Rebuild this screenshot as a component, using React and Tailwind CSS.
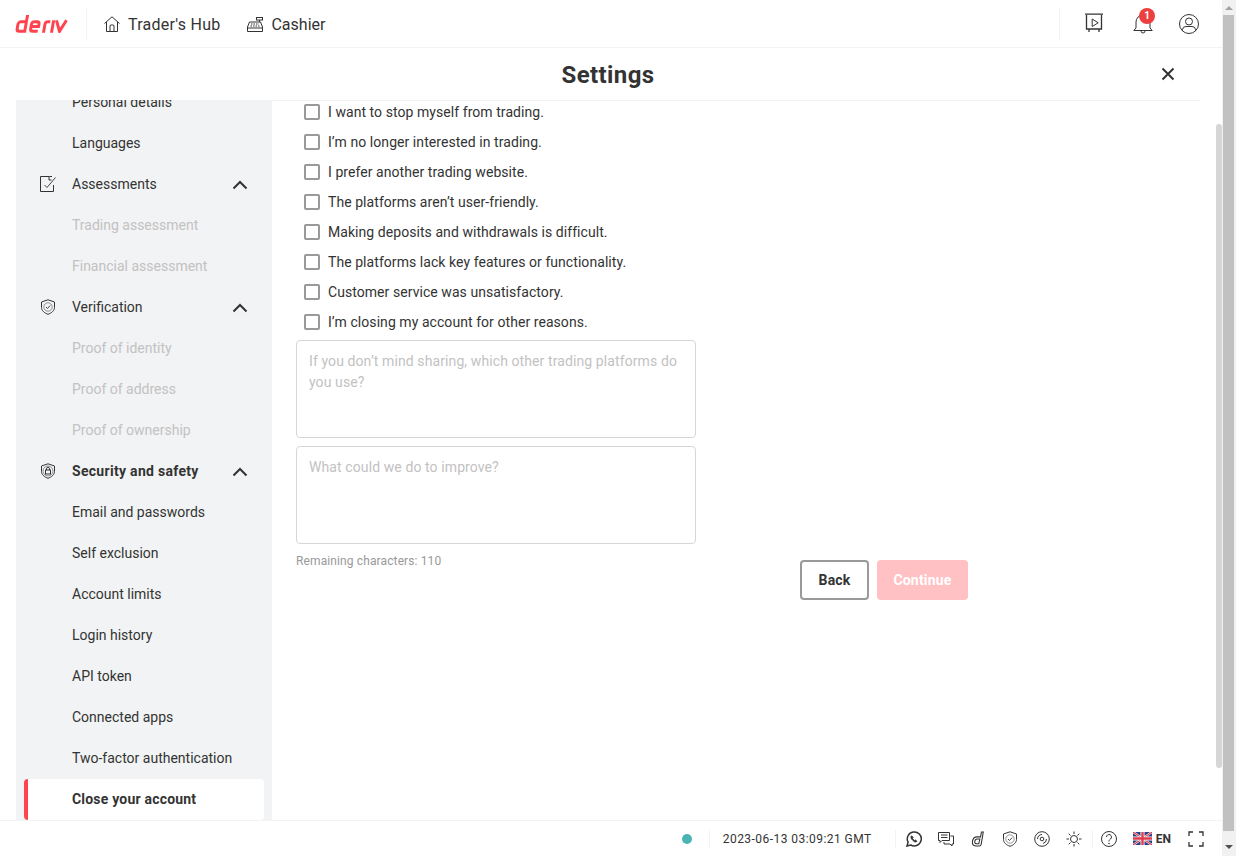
import React from "react";

function Chevron() {
  return (
    <svg width="16" height="10" viewBox="0 0 16 10" fill="none" stroke="#333333" strokeWidth="2" className="shrink-0 mt-[2px]">
      <path d="M1.5 8.5 8 2l6.5 6.5" />
    </svg>
  );
}

function DocIcon() {
  return (
    <svg width="16" height="16" viewBox="0 0 16 16" fill="none" stroke="#333333" strokeWidth="1">
      <path d="M13.5 9v6.500H.5V.5h9l2.500 0M9 .5V4h2.500" />
      <path d="M4.500 9 7 11.500 15.500 1.500" strokeWidth="0.9" />
    </svg>
  );
}

function ShieldCheck() {
  return (
    <svg width="16" height="16" viewBox="0 0 16 16" fill="none" stroke="#333333" strokeWidth="1">
      <path d="M8 .8 14.500 3v5.500c0 3-2.800 5.500-6.500 6.800C4.300 14 1.500 11.500 1.500 8.500V3z" />
      <circle cx="8" cy="8" r="4.200" strokeWidth="0.5" />
      <path d="M6 8l1.500 1.500L10.200 6.500" strokeWidth="0.9" />
    </svg>
  );
}

function ShieldLock() {
  return (
    <svg width="16" height="16" viewBox="0 0 16 16" fill="none" stroke="#333333" strokeWidth="1">
      <path d="M8 .8 14.500 3v5.500c0 3-2.800 5.500-6.500 6.800C4.300 14 1.500 11.500 1.500 8.500V3z" />
      <circle cx="8" cy="8" r="5" strokeWidth="0.5" />
      <rect x="5.500" y="7" width="5" height="4" />
      <path d="M6.500 7V5.800a1.500 1.500 0 0 1 3 0V7" />
    </svg>
  );
}

function SideItem({ children, disabled }) {
  return (
    <div className={`h-[41px] shrink-0 flex items-center pl-[56px] text-sm ${disabled ? "text-[#c2c2c2]" : "text-[#333333]"}`}>
      {children}
    </div>
  );
}

function SideGroup({ icon, label, bold }) {
  return (
    <div className="h-[41px] shrink-0 flex items-center pl-6 pr-6">
      <span className="w-8 flex justify-start">{icon}</span>
      <span className={`flex-1 text-sm text-[#333333] ${bold ? "font-bold tracking-[0.3px]" : ""}`}>{label}</span>
      <Chevron />
    </div>
  );
}

function Sidebar() {
  return (
    <aside className="w-[256px] ml-4 shrink-0 bg-[#f2f3f4] overflow-hidden">
      <div className="-mt-[19px] flex flex-col">
        <SideItem>Personal details</SideItem>
        <SideItem>Languages</SideItem>
        <SideGroup icon={<DocIcon />} label="Assessments" />
        <SideItem disabled>Trading assessment</SideItem>
        <SideItem disabled>Financial assessment</SideItem>
        <SideGroup icon={<ShieldCheck />} label="Verification" />
        <SideItem disabled>Proof of identity</SideItem>
        <SideItem disabled>Proof of address</SideItem>
        <SideItem disabled>Proof of ownership</SideItem>
        <SideGroup icon={<ShieldLock />} label="Security and safety" bold />
        <SideItem>Email and passwords</SideItem>
        <SideItem>Self exclusion</SideItem>
        <SideItem>Account limits</SideItem>
        <SideItem>Login history</SideItem>
        <SideItem>API token</SideItem>
        <SideItem>Connected apps</SideItem>
        <SideItem>Two-factor authentication</SideItem>
        <div className="mx-2 mt-px h-[41px] shrink-0 flex items-center pb-[2px] pl-11 bg-white rounded border-l-4 border-[#ff444f] text-sm font-bold tracking-[0.2px] text-[#333333]">
          Close your account
        </div>
      </div>
    </aside>
  );
}

const reasons = [
  "I want to stop myself from trading.",
  "I’m no longer interested in trading.",
  "I prefer another trading website.",
  "The platforms aren’t user-friendly.",
  "Making deposits and withdrawals is difficult.",
  "The platforms lack key features or functionality.",
  "Customer service was unsatisfactory.",
  "I’m closing my account for other reasons.",
];

function Reason({ text }) {
  return (
    <label className="h-[30px] flex items-center pl-2">
      <span className="w-4 h-4 rounded-[2px] border-2 border-[#999999] bg-white shrink-0" />
      <span className="ml-2 text-sm tracking-[0.06px] text-[#333333]">{text}</span>
    </label>
  );
}

function Content() {
  return (
    <main className="flex-1 min-w-0 relative pl-6 overflow-hidden">
      <div className="w-[672px] flex">
        <div className="w-[400px] flex flex-col">
          <div className="-mt-[3px] flex flex-col">
            {reasons.map((r) => (
              <Reason key={r} text={r} />
            ))}
          </div>
          <textarea
            readOnly
            placeholder="If you don’t mind sharing, which other trading platforms do you use?"
            className="mt-[3px] w-[400px] h-[98px] resize-none rounded border border-[#d6d6d6] px-3 py-[10px] text-sm tracking-[0.1px] leading-[21px] outline-none placeholder:text-[#c2c2c2] overflow-hidden"
          />
          <textarea
            readOnly
            placeholder="What could we do to improve?"
            className="mt-2 w-[400px] h-[98px] resize-none rounded border border-[#d6d6d6] px-3 py-[10px] text-sm tracking-[0.1px] leading-[21px] outline-none placeholder:text-[#c2c2c2] overflow-hidden"
          />
          <p className="mt-2 text-xs tracking-[0.12px] leading-[18px] text-[#999999]">Remaining characters: 110</p>
        </div>
        <div className="flex-1 flex justify-end items-start gap-2 pt-[460px]">
          <button className="w-[69px] h-10 rounded border-2 border-[#999999] bg-white text-sm font-bold tracking-[0.2px] text-[#333333]">Back</button>
          <button className="w-[91px] h-10 rounded bg-[#ffc1c4] text-sm font-bold tracking-[0.2px] text-white">Continue</button>
        </div>
      </div>
      <div className="absolute right-0 top-6 bottom-[52px] w-[6px] rounded-full bg-[#d6d6d6]" />
    </main>
  );
}

function Footer() {
  const s = { fill: "none", stroke: "#333333", strokeWidth: 1 };
  return (
    <footer className="h-9 shrink-0 border-t border-[#f2f3f4] bg-white flex items-center justify-end pr-[18px]">
      <span className="w-[10px] h-[10px] rounded-full bg-[#4bb4b3]" />
      <span className="ml-[17px] w-px h-[18px] bg-[#f2f3f4]" />
      <span className="ml-[13px] w-[148px] whitespace-nowrap text-xs tracking-[0.45px] text-[#333333]">2023-06-13 03:09:21 GMT</span>
      <span className="ml-[24px] w-px h-[18px] bg-[#f2f3f4]" />
      <span className="ml-[10px] flex items-center gap-4">
        <svg width="16" height="16" viewBox="0 0 16 16" {...s} strokeWidth="1.500">
          <path d="M1 15l1.100-3.800A7 7 0 1 1 4.800 14z" />
          <path d="M5.500 4.800c-1 1 -.5 2.700 1 4.300s3.200 2.500 4.300 1.300l-1.300-1.500-1 .6c-.8-.3-1.800-1.300-2.100-2.200l.6-1z" strokeWidth="1" fill="#333333" />
        </svg>
        <svg width="16" height="16" viewBox="0 0 16 16" {...s}>
          <path d="M.5 1.500h11v8H4l-2 2V9.500H.5z" />
          <path d="M3 4h6.500M3 6.500h6.500" />
          <path d="M12.500 5h3v8H14v2l-2-2H6v-2" />
        </svg>
        <svg width="16" height="16" viewBox="1 0.500 12.500 15" {...s}>
          <path d="M10.500 1.500 9.600 6H6.500C4 6 2.300 8 2 10.500 1.800 13 3 14.500 5.500 14.500h3c1 0 1.500-.5 1.700-1.500l2-11.500z" />
          <path d="M9 8 8 12.500H6C4.700 12.500 4 11.500 4.200 10.200 4.400 9 5.200 8 6.500 8z" />
        </svg>
        <ShieldCheck />
        <svg width="16" height="16" viewBox="0 0 16 16" {...s}>
          <circle cx="8" cy="8" r="7.300" />
          <circle cx="8" cy="8" r="1.800" />
          <path d="M3.500 8A4.500 4.500 0 0 1 8 3.500M12.500 8A4.500 4.500 0 0 1 9 12.400" />
        </svg>
        <svg width="16" height="16" viewBox="0 0 16 16" {...s}>
          <circle cx="8" cy="8" r="3.500" />
          <path d="M8 .5v2.500M8 13v2.500M.5 8H3M13 8h2.500M2.700 2.700l1.800 1.800M11.500 11.500l1.800 1.800M2.700 13.300l1.800-1.800M11.500 4.500l1.800-1.800" />
        </svg>
      </span>
      <span className="ml-[10px] w-px h-[18px] bg-[#f2f3f4]" />
      <svg className="ml-2" width="16" height="16" viewBox="0 0 16 16" {...s}>
        <circle cx="8" cy="8" r="7.500" />
        <path d="M5.500 6a2.500 2.500 0 1 1 4 2c-1 .8-1.500 1-1.500 2.500" />
        <circle cx="8" cy="12.500" r=".4" />
      </svg>
      <svg className="ml-4" width="19" height="13" viewBox="0 0 19 13">
        <rect width="19" height="13" fill="#2b3f86" />
        <path d="M0 0l19 13M19 0 0 13" stroke="#ffffff" strokeWidth="2.200" />
        <path d="M0 0l19 13M19 0 0 13" stroke="#dd3d4c" strokeWidth="1.100" />
        <path d="M9.500 0v13M0 6.500h19" stroke="#ffffff" strokeWidth="4" />
        <path d="M9.500 0v13M0 6.500h19" stroke="#dd3d4c" strokeWidth="2.400" />
      </svg>
      <span className="ml-[4px] text-xs font-bold text-[#333333]">EN</span>
      <svg className="ml-[17px]" width="16" height="16" viewBox="0 0 16 16" fill="none" stroke="#333333" strokeWidth="1.300">
        <path d="M1 5V1h4M11 1h4v4M15 11v4h-4M5 15H1v-4" />
      </svg>
    </footer>
  );
}

function DerivLogo() {
  return (
    <svg className="ml-[15px] shrink-0" width="53" height="18" viewBox="0 0 53 18" fill="none" stroke="#ff444f" strokeWidth="3">
      <g transform="translate(3.100 0) skewX(-10)">
        <path d="M9.500 0V16.200H4a2.500 2.500 0 0 1-2.500-2.500V9.300A2.500 2.500 0 0 1 4 6.800H9.500" />
        <path d="M22.500 16.200H17.500a2.500 2.500 0 0 1-2.500-2.500V9.300a2.500 2.500 0 0 1 2.500-2.500H20a2.500 2.500 0 0 1 2.500 2.500V11.500H15" />
        <path d="M28.500 17.700V9.300a2.500 2.500 0 0 1 2.500-2.500h2.300" />
        <path d="M36.500 5.300V17.700" />
      </g>
      <path d="M41.500 5.300 44.500 16.300 51.500 5.300" />
    </svg>
  );
}

function Header() {
  return (
    <header className="h-12 shrink-0 border-b border-[#f2f3f4] flex items-center bg-white">
      <DerivLogo />
      <span className="ml-[18px] w-px h-8 bg-[#f2f3f4]" />
      <svg className="ml-[17px]" width="16" height="16" viewBox="0 0 16 16" fill="none" stroke="#333333" strokeWidth="1">
        <path d="M.5 7.500 8 .8l7.500 6.700M2.500 6v9.500h11V6" />
        <path d="M6 15.500V10a1 1 0 0 1 1-1h2a1 1 0 0 1 1 1v5.500" />
      </svg>
      <span className="ml-2 pt-[2px] text-base tracking-[0.25px] text-[#333333]">Trader's Hub</span>
      <svg className="ml-[27px] mt-[2px]" width="16" height="15" viewBox="0 0 16 15" fill="none" stroke="#333333" strokeWidth="1">
        <path d="M.5 14.500h15v-4.500L13.500 5H2.500L.5 10z" />
        <path d="M.5 11h15" />
        <rect x="9.500" y=".5" width="6" height="2.500" />
        <path d="M12.500 3v2" />
        <path d="M4 7h8M3.500 9h9" strokeDasharray="1.500 1" />
      </svg>
      <span className="ml-2 pt-[2px] text-base text-[#333333]">Cashier</span>
      <span className="ml-auto w-px h-8 bg-[#f2f3f4]" />
      <svg className="ml-[25px] -mt-[2px]" width="20" height="20" viewBox="0 0 20 20" fill="none" stroke="#333333" strokeWidth="1">
        <path d="M0 1.200h18M1.500 2v14h15V2" strokeWidth="1.300" />
        <path d="M7.200 6v7.500l6-3.700z" />
        <path d="M4 16v3M14 16v3" strokeWidth="1.300" />
      </svg>
      <span className="ml-[28px] relative w-5 h-5">
        <svg width="20" height="20" viewBox="0 0 20 20" fill="none" stroke="#333333" strokeWidth="1">
          <path d="M.8 16.500h18.400l-2.200-2.500V8A7 7 0 0 0 3 8v6z" />
          <path d="M8 17a2 2 0 0 0 4 0" />
        </svg>
        <span className="absolute -top-[6px] left-[6px] w-4 h-4 rounded-full bg-[#ec3f3f] text-white text-[10px] leading-4 font-bold text-center">1</span>
      </span>
      <svg className="ml-[26px] mr-[23px]" width="20" height="20" viewBox="0 0 20 20" fill="none" stroke="#333333" strokeWidth="1">
        <circle cx="10" cy="10" r="9.500" />
        <circle cx="10" cy="7.500" r="3.500" />
        <path d="M3.500 17v-1.500a3.500 3.500 0 0 1 3.500-3h6a3.500 3.500 0 0 1 3.500 3V17" />
      </svg>
    </header>
  );
}

function PageScrollbar() {
  return (
    <div className="w-[14px] shrink-0 bg-[#f1f1f1] flex flex-col">
      <div className="h-[15px] shrink-0 flex items-center justify-center pr-[1px]">
        <span className="w-0 h-0 border-x-4 border-x-transparent border-b-4 border-b-[#a3a3a3]" />
      </div>
      <div className="flex-1 ml-px w-[11px] bg-[#c1c1c1]" />
      <div className="h-[25px] shrink-0 flex items-start pt-[14px] justify-center pr-[1px]">
        <span className="w-0 h-0 border-x-4 border-x-transparent border-t-4 border-t-[#505050]" />
      </div>
    </div>
  );
}

export default function App() {
  return (
    <div className="h-[856px] w-full flex overflow-hidden bg-white font-['Roboto','Liberation_Sans',sans-serif]">
      <div className="flex-1 min-w-0 flex flex-col">
        <Header />
        <div className="h-[52px] shrink-0 flex items-center justify-center relative pr-[6px] pt-[2px]">
          <h1 className="text-2xl font-bold tracking-[0.4px] text-[#333333]">Settings</h1>
          <svg className="absolute right-[47px] top-[19px]" width="14" height="14" viewBox="0 0 14 14" fill="none" stroke="#333333" strokeWidth="2">
            <path d="M1.500 1.500l11 11M12.500 1.500l-11 11" />
          </svg>
          <span className="absolute left-[272px] right-[22px] -bottom-px h-px bg-[#f2f3f4] z-10" />
        </div>
        <div className="flex-1 min-h-0 flex">
          <Sidebar />
          <Content />
        </div>
        <Footer />
      </div>
      <PageScrollbar />
    </div>
  );
}
